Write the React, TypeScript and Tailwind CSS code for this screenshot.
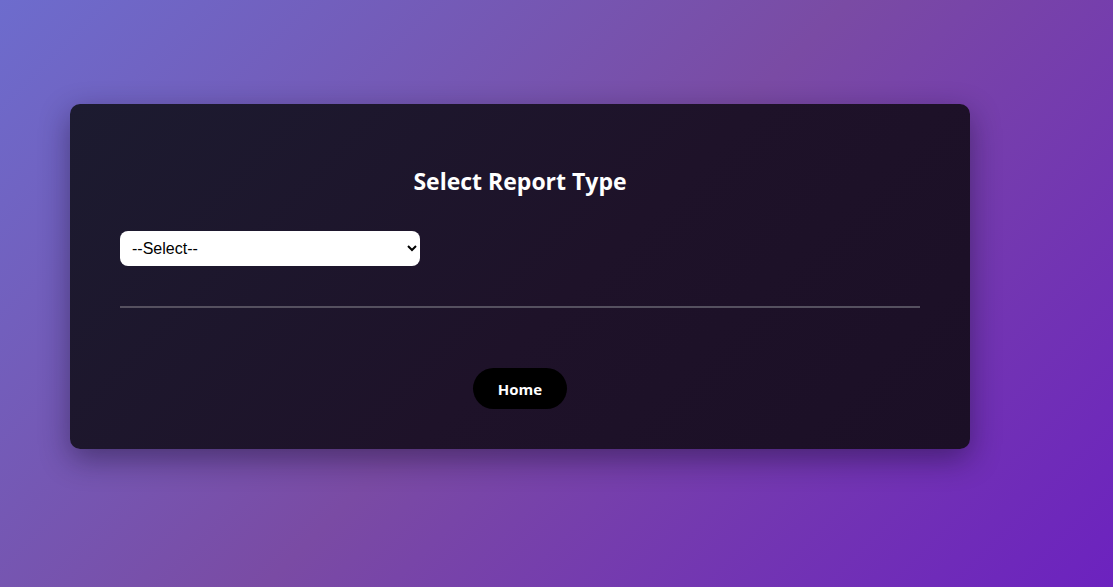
export default function App() {
  return (
    <div className="min-h-[587px] w-full bg-[linear-gradient(135deg,#6d6ccd_0%,#7a4ba4_50%,#6c22bf_100%)] pt-[104px] pl-[70px] font-['Open_Sans','Noto_Sans',sans-serif]">
      <div className="w-[900px] rounded-[10px] bg-[linear-gradient(135deg,#1c1b30_0%,#1e1229_55%,#1b0f26_100%)] px-[50px] pt-[50px] pb-[40px] shadow-[0_10px_30px_rgba(20,10,40,0.45)]">
        <h2 className="mt-[12px] text-center text-[23px] leading-[30px] font-bold text-white">
          Select Report Type
        </h2>
        <div className="mt-[35px]">
          <select className="h-[35px] w-[300px] rounded-[8px] bg-white pl-[8px] pr-[4px] font-['Liberation_Sans',Arial,sans-serif] text-[16px] text-black outline-none">
            <option>--Select--</option>
          </select>
        </div>
        <hr className="mt-[40px] border-0 border-t-[2px] border-[#55505f]" />
        <div className="mt-[60px] flex justify-center">
          <button
            type="button"
            className="h-[41px] w-[94px] rounded-full bg-black pt-[1px] text-[15px] font-bold text-white"
          >
            Home
          </button>
        </div>
      </div>
    </div>
  );
}
